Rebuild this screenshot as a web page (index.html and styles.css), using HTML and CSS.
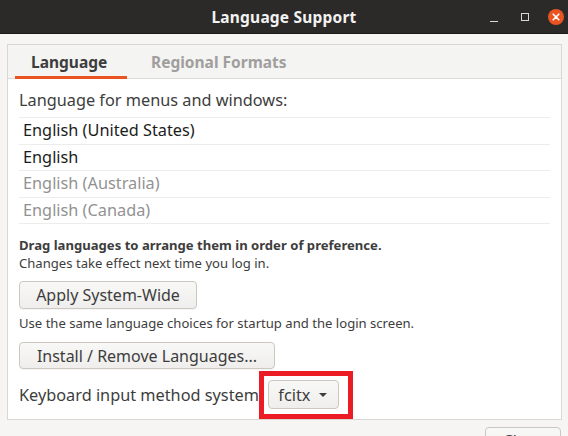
FILE: index.html
```html
<!DOCTYPE html>
<html>
<head>
<meta charset="utf-8">
<link rel="stylesheet" href="styles.css">
</head>
<body>
<div class="window">
  <header class="titlebar">
    <div class="tb-side"></div>
    <div class="tb-title">Language Support</div>
    <div class="tb-side tb-controls">
      <span class="ctl ctl-min"></span>
      <span class="ctl ctl-max"></span>
      <span class="ctl ctl-close">
        <svg width="16" height="16" viewBox="0 0 16 16"><circle cx="8" cy="8" r="8" fill="#e95420"/><path d="M5.2 5.2 L10.8 10.8 M10.8 5.2 L5.2 10.8" stroke="#fff" stroke-width="1.6" stroke-linecap="round"/></svg>
      </span>
    </div>
  </header>
  <main class="main">
    <section class="notebook">
      <nav class="tabs">
        <div class="tab tab-active">Language</div>
        <div class="tab">Regional Formats</div>
      </nav>
      <div class="page">
        <div class="label">Language for menus and windows:</div>
        <ul class="langlist">
          <li class="row">English (United States)</li>
          <li class="row">English</li>
          <li class="row row-dim">English (Australia)</li>
          <li class="row row-dim">English (Canada)</li>
        </ul>
        <p class="hint"><b>Drag languages to arrange them in order of preference.</b><br>Changes take effect next time you log in.</p>
        <button class="btn btn-apply">Apply System-Wide</button>
        <p class="small">Use the same language choices for startup and the login screen.</p>
        <button class="btn btn-install">Install / Remove Languages...</button>
        <div class="kbrow">
          <span class="kblabel">Keyboard input method system:</span>
          <span class="combo">fcitx <span class="caret"></span></span>
        </div>
      </div>
    </section>
    <footer class="actions">
      <span class="help">Help</span>
      <button class="btn btn-close">Close</button>
    </footer>
  </main>
</div>
</body>
</html>
```
FILE: styles.css
```css
* { box-sizing: border-box; }
html, body { margin: 0; padding: 0; }
body {
  width: 568px;
  height: 436px;
  overflow: hidden;
  background: #f6f5f4;
  font-family: "Noto Sans", "Open Sans", sans-serif;
  color: #3d3d3d;
}
.window { display: flex; flex-direction: column; height: 436px; }
.titlebar {
  height: 34px;
  background: #2c2a28;
  display: grid;
  grid-template-columns: 1fr auto 1fr;
  align-items: center;
  border-bottom: 1px solid #1c1b1a;
}
.tb-title {
  color: #f2f2f2;
  font-weight: 700;
  font-size: 15.5px;
  letter-spacing: 0.2px;
}
.tb-controls {
  display: flex;
  justify-content: flex-end;
  align-items: center;
  padding-right: 4px;
  height: 34px;
}
.ctl { display: block; }
.ctl-min {
  width: 8px; height: 1px; background: #d8d8d8;
  margin-top: 8px; margin-right: 23px;
}
.ctl-max {
  width: 8px; height: 8px; border: 1px solid #d8d8d8;
  margin-top: -1px; margin-right: 19px;
}
.ctl-close { width: 16px; height: 16px; }
.ctl-close svg { display: block; }

.main { flex: 1; padding: 10px 6px 0 7px; display: flex; flex-direction: column; }
.notebook {
  border: 1px solid #d8d7d4;
  background: #fff;
  height: 376px;
}
.tabs {
  height: 34px;
  background: #f4f4f3;
  border-bottom: 1px solid #dddcd9;
  display: flex;
  padding-left: 7px;
}
.tab {
  font-weight: 700;
  font-size: 15.5px;
  color: #a09f9d;
  padding: 0 16px;
  line-height: 34px;
  position: relative;
}
.tab + .tab { margin-left: 8px; padding-left: 16px; }
.tab-active { color: #3d3d3d; width: 112px; padding-left: 16px; }
.tab-active::after {
  content: "";
  position: absolute;
  left: 0; right: 0; bottom: -1px;
  height: 3px;
  background: #e95420;
}
.page { padding: 11px 11px 0 11px; }
.label { font-size: 16.3px; line-height: 20px; }
.langlist {
  list-style: none;
  margin: 7px 0 0 0;
  padding: 0;
  border-top: 1px solid #eeedeb;
}
.row {
  height: 26.5px;
  line-height: 25.5px;
  border-bottom: 1px solid #eeedeb;
  padding-left: 4px;
  font-size: 16.3px;
  color: #1c1c1c;
}
.row-dim { color: #929292; }
.hint { margin: 12px 0 0; font-size: 13.1px; line-height: 18px; }
.hint b { font-weight: 700; }
.btn {
  display: block;
  font-family: inherit;
  font-size: 16px;
  color: #3d3d3d;
  background: linear-gradient(#f8f8f7, #efeeed);
  border: 1px solid #cdc7c2;
  border-radius: 4px;
  height: 28px;
  padding: 0 12px;
  box-shadow: 0 1px 0 rgba(0,0,0,0.04);
}
.btn-apply { margin-top: 9px; width: 178px; }
.small { margin: 5px 0 0; font-size: 13.1px; line-height: 18px; }
.btn-install { margin-top: 10px; width: 256px; height: 27px; }
.kbrow { display: flex; align-items: center; margin-top: 11px; }
.kblabel { font-size: 16.3px; line-height: 20px; }
.combo {
  position: relative;
  margin-left: 5px;
  width: 71px; height: 29px;
  display: inline-flex; align-items: center;
  padding-left: 9px;
  font-size: 16.3px;
  border: 1px solid #cdc7c2;
  border-radius: 4px;
  background: linear-gradient(#f8f8f7, #efeeed);
}
.caret {
  margin-left: 9px;
  width: 0; height: 0;
  border-left: 4px solid transparent;
  border-right: 4px solid transparent;
  border-top: 4px solid #3d3d3d;
}
.combo::after {
  content: "";
  position: absolute;
  left: -10px; right: -15px; top: -10px; bottom: -11px;
  border: 5px solid #ec1c24;
}
.actions {
  display: flex;
  justify-content: space-between;
  align-items: flex-start;
  padding: 7px 1px 0 21px;
}
.help { font-size: 16px; margin-top: 5px; color: #2f3a44; }
.btn-close { width: 76px; height: 28px; }
```
